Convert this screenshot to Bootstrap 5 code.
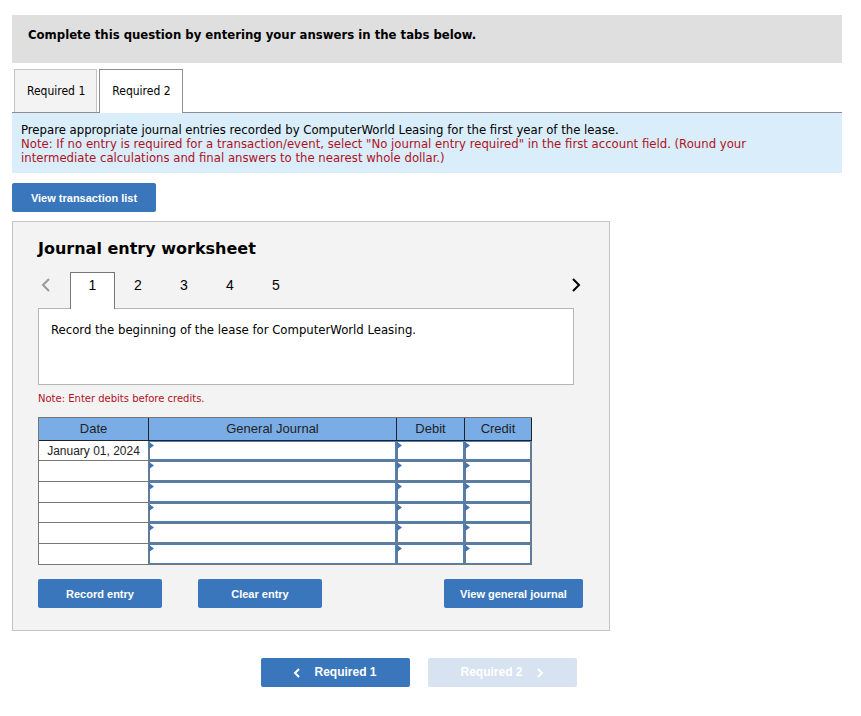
<!DOCTYPE html>
<html lang="en">
<head>
<meta charset="utf-8">
<meta name="viewport" content="width=device-width, initial-scale=1">
<title>Journal entry worksheet</title>
<link href="https://cdn.jsdelivr.net/npm/bootstrap@5.3.0/dist/css/bootstrap.min.css" rel="stylesheet">
<style>
  body { font-family: "DejaVu Sans Condensed", "DejaVu Sans", sans-serif; font-size: 13px; line-height: 14px; color: #000; }
  .page { padding: 15px 19px 24px 12px; }
  .prompt { background: #dfdfdf; font-size: 13px; font-weight: 700; line-height: 16px; padding: 12px 16px 20px; margin-bottom: 6px; }
  .req-tabs { border-bottom: 1px solid #8e8e8e; padding-left: 2px; gap: 2px; }
  .req-tabs .nav-link { border: 1px solid #c4c4c4; border-bottom: 0; border-radius: 0; background: #f3f3f3; color: #000; padding: 14px 11px 13px 12px; margin-bottom: 0; line-height: 15px; font-size: 12px; }
  .req-tabs .nav-link.active { background: #fff; color: #000; border-color: #8e8e8e; margin-bottom: -1px; padding-bottom: 14px; }
  .direction { background: #d9edfb; padding: 10px 60px 8px 9px; }
  .warn { color: #b0121b; }
  .act { font-family: "Liberation Sans", Arial, sans-serif; font-size: 11px; font-weight: 700; line-height: 15px; color: #fff; background: #3a76bb; border: 0; border-radius: 2px; padding: 8px 0 6px; min-width: 124px; }
  .act:hover { background: #2f649f; color: #fff; }
  .act-list { min-width: 144px; margin-top: 10px; }
  .act-journal { min-width: 139px; }
  .act-step { display: flex; align-items: center; justify-content: center; gap: 14px; min-width: 149px; font-size: 12px; padding: 7px 0; }
  .act-step:disabled { background: #d8e3f1; color: #fff; opacity: 1; }
  .sheet { max-width: 598px; background: #f3f3f3; border: 1px solid #c4c4c4; padding: 17px 26px 22px 25px; margin-top: 9px; }
  .sheet h1 { font-family: "DejaVu Sans", sans-serif; font-size: 16px; line-height: 20px; font-weight: 700; margin: 0 0 13px; }
  .steps { font-family: "Liberation Sans", Arial, sans-serif; font-size: 14px; padding-right: 2px; }
  .steps .nav-link { width: 46px; padding: 4px 0 16px; line-height: 16px; text-align: center; color: #000; border: 1px solid transparent; border-bottom: 0; border-radius: 0; }
  .steps .nav-link.active { width: 45px; background: #fff; color: #000; border-color: #777; position: relative; }
  .arrow { width: 32px; border: 0; background: none; padding: 6px 0 0 3px; text-align: left; }
  .arrow-next { width: 10px; padding-left: 1px; }
  .task { background: #fff; border: 1px solid #b5b5b5; margin: -1px 9px 0 0; padding: 14px 12px; min-height: 77px; }
  .hint { font-size: 10px; line-height: 12px; margin: 8px 0 12px; font-family: "DejaVu Sans", sans-serif; }
  .ledger { font-family: "Liberation Sans", Arial, sans-serif; font-size: 12px; line-height: 14px; color: #222; max-width: 494px; width: 100%; table-layout: fixed; border-collapse: separate; border-spacing: 0; border: 0 solid #777; border-width: 1px 0 0 1px; margin-bottom: 14px; }
  .ledger th { background: #7aade6; font-weight: 400; font-size: 13px; text-align: center; height: 23px; padding: 0; border: 0 solid #222; border-width: 0 1px 1px 0; }
  .ledger td { background: #fff; border: 0 solid #777; border-width: 0 1px 1px 0; height: 21px; padding: 0; text-align: center; }
  .ledger tbody tr:first-child td, .ledger tbody tr:nth-child(4) td { height: 20px; }
  .ledger .c-date { width: 110px; }
  .ledger .c-debit { width: 68px; }
  .ledger .c-credit { width: 67px; }
  .field { position: relative; }
  .field input { display: block; width: 100%; height: 20px; border: 1px solid #4a80bd; border-radius: 0; background: #fff; padding: 0 5px; font-size: 12px; }
  .ledger tbody tr:first-child input, .ledger tbody tr:nth-child(4) input { height: 19px; }
  .field::after { content: ""; position: absolute; left: 0; top: 1px; width: 5px; height: 7px; background: #3a76bb; clip-path: polygon(0 0, 100% 50%, 0 100%); pointer-events: none; }
  .sheet-actions { gap: 36px; }
  .pager { gap: 18px; padding: 27px 17px 0 0; }
</style>
<script src="https://cdn.jsdelivr.net/npm/bootstrap@5.3.0/dist/js/bootstrap.bundle.min.js"></script>
</head>
<body>
<main class="page">
  <div class="prompt">Complete this question by entering your answers in the tabs below.</div>
  <nav class="nav nav-tabs req-tabs" aria-label="Question parts">
    <a class="nav-link" href="#required1">Required 1</a>
    <a class="nav-link active" href="#required2" aria-current="page">Required 2</a>
  </nav>
  <div class="direction" id="required2">
    <div>Prepare appropriate journal entries recorded by ComputerWorld Leasing for the first year of the lease.</div>
    <div class="warn">Note: If no entry is required for a transaction/event, select "No journal entry required" in the first account field. (Round your intermediate calculations and final answers to the nearest whole dollar.)</div>
  </div>
  <button type="button" class="btn act act-list d-block">View transaction list</button>

  <section class="sheet">
    <h1>Journal entry worksheet</h1>
    <div class="steps d-flex align-items-start">
      <button type="button" class="arrow" aria-label="Previous entry"><svg class="d-block" width="9" height="14" viewBox="0 0 9 14" fill="none" stroke="#999" stroke-width="2"><path d="M8 1 2 7l6 6"/></svg></button>
      <nav class="nav flex-grow-1" aria-label="Entries">
        <a class="nav-link active" href="#entry1" aria-current="page">1</a>
        <a class="nav-link" href="#entry2">2</a>
        <a class="nav-link" href="#entry3">3</a>
        <a class="nav-link" href="#entry4">4</a>
        <a class="nav-link" href="#entry5">5</a>
      </nav>
      <button type="button" class="arrow arrow-next" aria-label="Next entry"><svg class="d-block" width="9" height="14" viewBox="0 0 9 14" fill="none" stroke="#000" stroke-width="2"><path d="m1 1 6 6-6 6"/></svg></button>
    </div>
    <div class="task" id="entry1">Record the beginning of the lease for ComputerWorld Leasing.</div>
    <p class="hint warn">Note: Enter debits before credits.</p>
    <table class="ledger">
      <thead><tr><th class="c-date" scope="col">Date</th><th scope="col">General Journal</th><th class="c-debit" scope="col">Debit</th><th class="c-credit" scope="col">Credit</th></tr></thead>
      <tbody>
        <tr><td>January 01, 2024</td><td class="field"><input type="text" aria-label="Account, line 1"></td><td class="field"><input type="text" aria-label="Debit, line 1"></td><td class="field"><input type="text" aria-label="Credit, line 1"></td></tr>
        <tr><td></td><td class="field"><input type="text" aria-label="Account, line 2"></td><td class="field"><input type="text" aria-label="Debit, line 2"></td><td class="field"><input type="text" aria-label="Credit, line 2"></td></tr>
        <tr><td></td><td class="field"><input type="text" aria-label="Account, line 3"></td><td class="field"><input type="text" aria-label="Debit, line 3"></td><td class="field"><input type="text" aria-label="Credit, line 3"></td></tr>
        <tr><td></td><td class="field"><input type="text" aria-label="Account, line 4"></td><td class="field"><input type="text" aria-label="Debit, line 4"></td><td class="field"><input type="text" aria-label="Credit, line 4"></td></tr>
        <tr><td></td><td class="field"><input type="text" aria-label="Account, line 5"></td><td class="field"><input type="text" aria-label="Debit, line 5"></td><td class="field"><input type="text" aria-label="Credit, line 5"></td></tr>
        <tr><td></td><td class="field"><input type="text" aria-label="Account, line 6"></td><td class="field"><input type="text" aria-label="Debit, line 6"></td><td class="field"><input type="text" aria-label="Credit, line 6"></td></tr>
      </tbody>
    </table>
    <div class="d-flex sheet-actions">
      <button type="button" class="btn act">Record entry</button>
      <button type="button" class="btn act">Clear entry</button>
      <button type="button" class="btn act act-journal ms-auto">View general journal</button>
    </div>
  </section>

  <div class="d-flex justify-content-center pager">
    <button type="button" class="btn act act-step"><svg width="7" height="10" viewBox="0 0 7 10" fill="none" stroke="currentColor" stroke-width="2"><path d="M6 1 2 5l4 4"/></svg>Required 1</button>
    <button type="button" class="btn act act-step" disabled>Required 2<svg width="7" height="10" viewBox="0 0 7 10" fill="none" stroke="currentColor" stroke-width="2"><path d="m1 1 4 4-4 4"/></svg></button>
  </div>
</main>
</body>
</html>
